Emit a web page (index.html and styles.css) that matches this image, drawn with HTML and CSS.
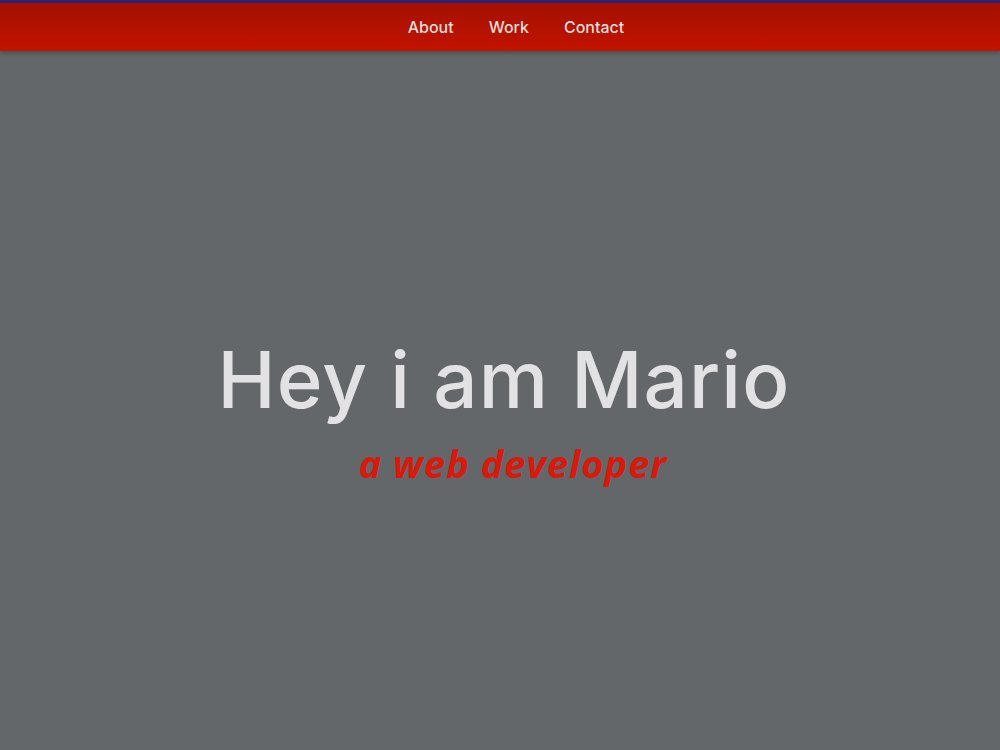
FILE: index.html
```html
<!DOCTYPE html>
<html lang="en">
<head>
  <meta charset="UTF-8" />
  <meta name="viewport" content="width=device-width, initial-scale=1.0"/>
  <title>Mario - Web Developer</title>
  <link rel="stylesheet" href="styles.css">
</head>
<body>

  <nav class="navbar">
    <a href="#about">About</a>
    <a href="#work">Work</a>
    <a href="#contact">Contact</a>
  </nav>

  <section class="hero">
    <h1>Hey i am Mario</h1>
    <p class="tagline">a web developer</p>
  </section>

</body>
</html>
```

FILE: styles.css
```css
* {
  box-sizing: border-box;
}

body {
  font-family: 'Inter', 'Noto Sans', sans-serif;
  margin: 0;
  padding: 0;
  background: #63676a;
  min-height: 100vh;
}

.navbar {
  height: 51px;
  border-top: 3px solid #2d2272;
  background: linear-gradient(to bottom, #a51000, #c21300);
  display: flex;
  justify-content: center;
  align-items: center;
  gap: 35px;
  padding-left: 32px;
  box-shadow: 0 2px 4px rgba(0, 0, 0, 0.25);
}

.navbar a {
  color: #e9dedb;
  text-decoration: none;
  font-size: 16px;
  font-weight: 500;
}

.hero {
  display: flex;
  flex-direction: column;
  align-items: center;
  padding-top: 282px;
  padding-left: 8px;
}

.hero h1 {
  margin: 0;
  color: #e2e2e4;
  font-size: 78px;
  font-weight: 500;
  letter-spacing: 1.2px;
  line-height: 1.2;
}

.tagline {
  margin: 14px 0 0;
  padding-left: 18px;
  color: #d8190c;
  font-family: 'Open Sans', sans-serif;
  font-style: italic;
  font-weight: 700;
  font-size: 38px;
  letter-spacing: 1px;
  line-height: 1.2;
}
```
